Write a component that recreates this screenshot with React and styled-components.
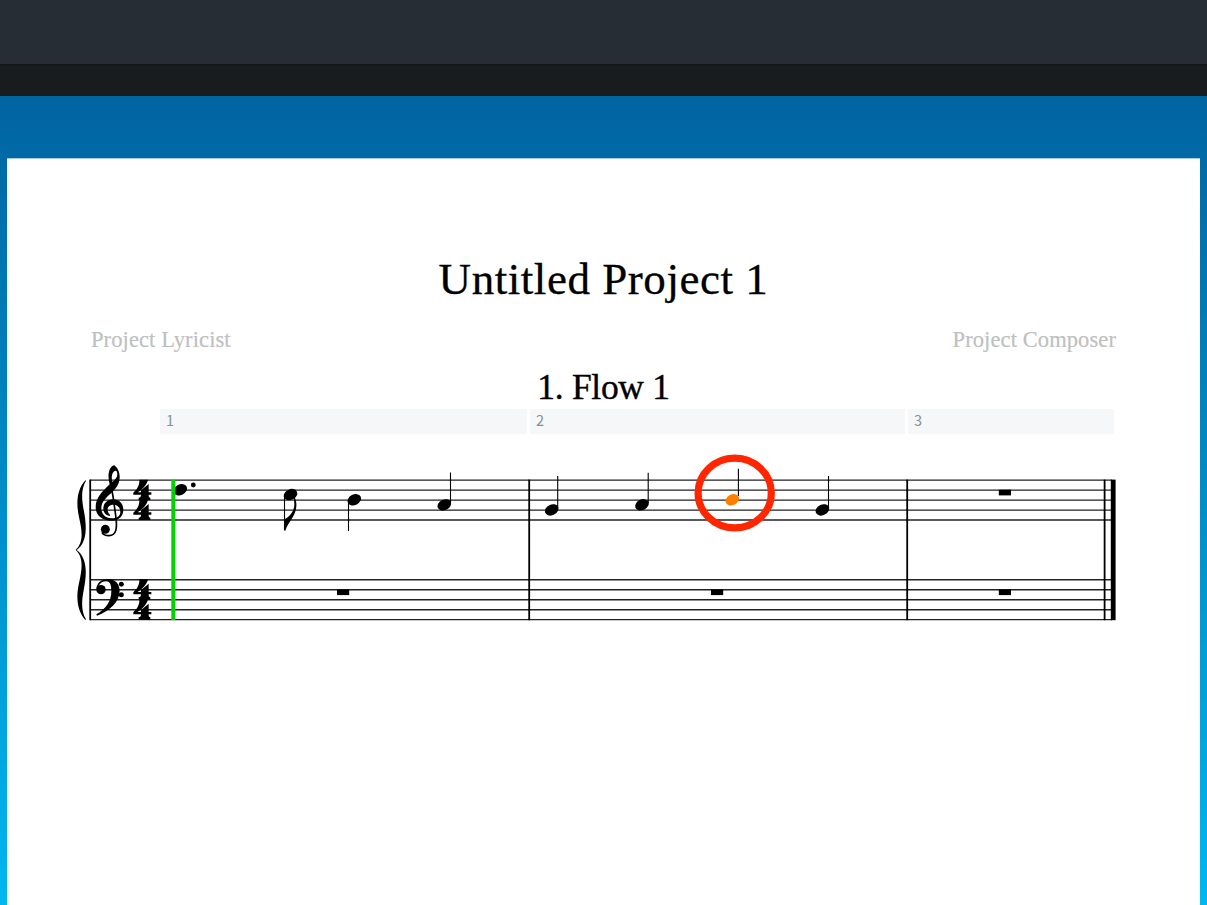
import React from 'react'
import styled, { createGlobalStyle } from 'styled-components'

const BARS = [
  { number: 1, width: 367 },
  { number: 2, width: 375 },
  { number: 3, width: 206 }
]

const STAVES = [480.15, 579.75]

const NOTES = [
  { x: 180.3, y: 489.8 },
  { x: 290.5, y: 494.6, stem: [284.5, 496, 530] },
  { x: 354.3, y: 499.8, stem: [348.5, 501, 531] },
  { x: 444.3, y: 504.9, stem: [450.5, 472.5, 503] },
  { x: 551.7, y: 509.9, stem: [557.7, 476, 508] },
  { x: 642, y: 504.8, stem: [648.2, 472.7, 503] },
  { x: 732.3, y: 499.8, stem: [738.4, 468.8, 496], selected: true },
  { x: 822.4, y: 509.9, stem: [828.5, 476, 508] }
]

const RESTS = [
  { x: 998.8, y: 489.7 },
  { x: 337, y: 589.4 },
  { x: 711, y: 589.4 },
  { x: 998.8, y: 589.4 }
]

const BARLINES = [90.2, 529.2, 907.2, 1104.6]

// glyphs are drawn at three times their size on the staff
const GLYPH_SCALE = 'translate(70 455) scale(0.33333)'

const TREBLE =
  'M119 183C106 180 100 171 100 161C100 145 112 133 130 133C148 133 160 146 160 164C160 184 145 197 124 197C98 197 77 182 77 157C77 128 96 111 119 88C114 70 114 52 121 40C125 34 129 31 133 31C142 38 149 50 149 66C149 86 139 100 125 113C108 128 94 140 94 160C94 178 107 190 124 190C141 190 151 183 151 171C151 157 142 149 131 149C120 149 113 155 113 163C113 173 117 178 121 180ZM127 81C136 74 142 67 142 58C142 51 140 47 137 47C129 47 122 62 127 81Z'

const BASS =
  'M79 404C79 384 95 372 114 372C136 372 149 387 149 407C149 440 120 467 81 482L79 478C108 461 124 440 124 408C124 390 120 379 109 379C98 379 91 384 87 391Z'

const BRACE =
  'M46 76C20 105 18 145 27 186C35 222 43 262 17 285C43 308 35 348 27 384C18 425 20 465 46 495L48 493C34 470 34 442 41 406C50 360 54 310 20 285C54 260 50 210 41 164C34 128 34 100 48 77Z'

const FOUR =
  'M208 74H234C231 90 216 103 203 112H213V106L236 87V112H244V119H236C236 125 237 128 241 128V135H206V128C211 128 213 125 213 119H190V113C202 102 209 90 208 74Z'

function Glyphs() {
  return (
    <g transform={GLYPH_SCALE}>
      <path d={BRACE} />
      <path d={TREBLE} fillRule="evenodd" />
      <path
        d="M122 84C125 100 134 155 138 190C141 215 141 242 117 242C107 242 99 238 96 232"
        fill="none"
        stroke="#000"
        strokeWidth="5"
      />
      <circle cx="106" cy="223" r="13.5" />
      <path d={BASS} />
      <circle cx="93" cy="404" r="14" />
      <circle cx="154" cy="388" r="7.5" />
      <circle cx="154" cy="419" r="7.5" />
      {[0, 60, 299, 359].map(offset => (
        <path key={offset} d={FOUR} transform={`translate(0 ${offset})`} />
      ))}
    </g>
  )
}

function Note({ x, y, stem, selected }) {
  return (
    <g>
      {stem && (
        <line
          x1={stem[0]}
          x2={stem[0]}
          y1={stem[1]}
          y2={stem[2]}
          stroke="#000"
          strokeWidth="1.1"
        />
      )}
      <ellipse
        cx={x}
        cy={y}
        rx="7.1"
        ry="5.3"
        transform={`rotate(-27 ${x} ${y})`}
        fill={selected ? '#ff7f00' : '#000'}
      />
    </g>
  )
}

function Score() {
  return (
    <Music viewBox="70 434 1050 206">
      {STAVES.map(top =>
        [0, 1, 2, 3, 4].map(line => (
          <line
            key={`${top}-${line}`}
            x1="90"
            x2="1112"
            y1={top + line * 9.98}
            y2={top + line * 9.98}
            stroke="#222"
            strokeWidth="1.4"
          />
        ))
      )}
      {BARLINES.map(x => (
        <line key={x} x1={x} x2={x} y1="479.6" y2="620.2" stroke="#000" strokeWidth="1.8" />
      ))}
      <rect x="1110.8" y="479.6" width="4.8" height="140.6" />
      <Glyphs />
      {NOTES.map(note => (
        <Note key={note.x} {...note} />
      ))}
      <circle cx="193.3" cy="485" r="2.4" />
      <path
        d="M73 197V163C88 156 102 140 103 120C103 110 102 100 99 96L104 96C110 110 110 120 108 132C103 158 85 170 76 197Z"
        transform="translate(260 465) scale(0.33333)"
      />
      {RESTS.map(({ x, y }) => (
        <rect key={`${x}-${y}`} x={x} y={y} width="12.2" height="5.7" />
      ))}
      <rect x="171.3" y="480" width="4" height="140" fill="#00d400" />
      <ellipse cx="734.7" cy="493" rx="36.6" ry="34.9" fill="none" stroke="#ff2600" strokeWidth="7.2" />
    </Music>
  )
}

export default function App() {
  return (
    <Window>
      <GlobalStyle />
      <Toolbar />
      <TabBar />
      <Canvas>
        <Page>
          <Title>Untitled Project 1</Title>
          <Credits>
            <span>Project Lyricist</span>
            <span>Project Composer</span>
          </Credits>
          <FlowTitle>1. Flow 1</FlowTitle>
          <SystemTrack>
            {BARS.map(({ number, width }) => (
              <Bar key={number} $width={width}>
                {number}
              </Bar>
            ))}
          </SystemTrack>
          <Score />
        </Page>
      </Canvas>
    </Window>
  )
}

const GlobalStyle = createGlobalStyle`
  body {
    margin: 0;
  }

  * {
    box-sizing: border-box;
  }
`

const Window = styled.div`
  display: flex;
  flex-direction: column;
  height: 905px;
  overflow: hidden;
  font-family: 'Century Schoolbook', 'Liberation Serif', serif;
`

const Toolbar = styled.header`
  flex: none;
  height: 64px;
  background: #262d35;
`

const TabBar = styled.div`
  flex: none;
  height: 32px;
  background: #181c1f;
  border-top: 2px solid #14171a;
`

const Canvas = styled.main`
  flex: 1;
  display: flex;
  padding: 62px 7px 0;
  background: linear-gradient(#0064a1, #00b7f0);
`

const Page = styled.article`
  flex: 1;
  display: flex;
  flex-direction: column;
  padding-top: 94px;
  border-top: 1px solid #a5cbe2;
  background: #fff;
`

const Title = styled.h1`
  margin: 0;
  font-size: 45px;
  font-weight: 400;
  line-height: 52px;
  letter-spacing: 0.55px;
  text-align: center;
  -webkit-text-stroke: 0.3px #000;
`

const Credits = styled.div`
  display: flex;
  justify-content: space-between;
  margin-top: 22px;
  padding: 0 84px;
  font-size: 22.5px;
  line-height: 26px;
  letter-spacing: 0.1px;
  color: #bfbfbf;
  -webkit-text-stroke: 0.2px #bfbfbf;
`

const FlowTitle = styled.h2`
  margin: 13px 0 0;
  font-size: 35.5px;
  font-weight: 400;
  line-height: 42px;
  letter-spacing: -0.3px;
  text-align: center;
  -webkit-text-stroke: 0.4px #000;
`

const SystemTrack = styled.div`
  display: flex;
  gap: 3px;
  margin: 1px 0 0 153px;
`

const Bar = styled.div`
  width: ${({ $width }) => $width}px;
  height: 25px;
  padding-left: 6px;
  background: #f5f7f9;
  color: #829296;
  font-family: 'Noto Sans CJK SC', sans-serif;
  font-size: 14.5px;
  line-height: 21px;
`

const Music = styled.svg`
  display: block;
  flex: none;
  width: 1050px;
  height: 206px;
  margin-left: 63px;
`
